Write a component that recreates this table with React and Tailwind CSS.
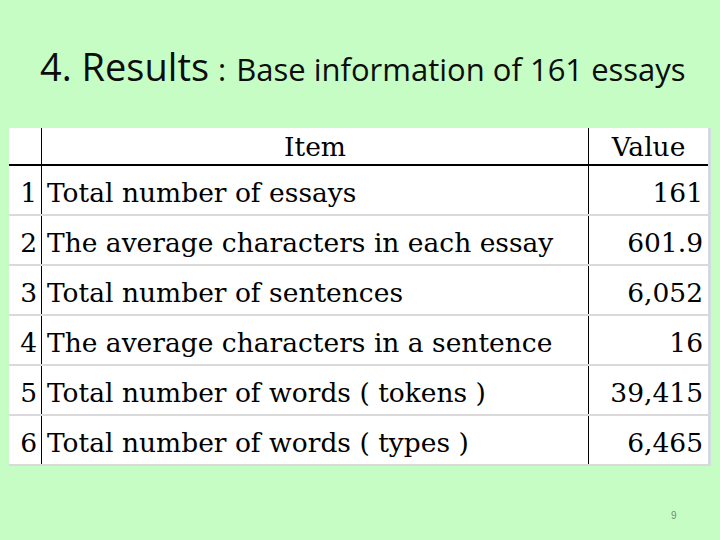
const ROWS = [
  { n: 1, item: 'Total number of essays', value: '161' },
  { n: 2, item: 'The average characters in each essay', value: '601.9' },
  { n: 3, item: 'Total number of sentences', value: '6,052' },
  { n: 4, item: 'The average characters in a sentence', value: '16' },
  { n: 5, item: 'Total number of words ( tokens )', value: '39,415' },
  { n: 6, item: 'Total number of words ( types )', value: '6,465' },
];

export default function App() {
  return (
    <div className="w-[720px] h-[540px] bg-[#c5fdc5] overflow-hidden">
      <div className="h-[128px] pt-[40px] pl-[40px]">
        <h1 className="font-['Open_Sans',sans-serif] text-[38px] leading-[52px] text-[#0d0d0d] whitespace-nowrap">
          <span>4. Results</span>
          <span className="text-[31px] ml-[9px] mr-[10px]">:</span>
          <span className="text-[31px]">Base information of 161 essays</span>
        </h1>
      </div>

      <div className="ml-[9px] w-[702px] bg-white border-r-[3px] border-[#d5d9e2] font-['DejaVu_Serif',serif] text-[26.5px] leading-[30px] text-black">
        <div className="grid grid-cols-[33px_547px_119px] h-[38px] border-b-2 border-black">
          <div className="border-r border-black" />
          <div className="border-r border-black pt-[4px] text-center">Item</div>
          <div className="pt-[4px] text-center">Value</div>
        </div>
        {ROWS.map((r) => (
          <div key={r.n} className="grid grid-cols-[33px_547px_119px] h-[50px] border-b-2 border-[#dadada]">
            <div className="border-r border-black pt-[12px] pr-[4px] text-right">{r.n}</div>
            <div className="border-r border-black pt-[12px] pl-[5px] whitespace-nowrap">{r.item}</div>
            <div className="pt-[12px] pr-[5px] text-right">{r.value}</div>
          </div>
        ))}
      </div>

      <div className="mt-[44px] pl-[671px] font-['Liberation_Sans',sans-serif] text-[10px] leading-[12px] text-[#6f8f6f]">9</div>
    </div>
  );
}
